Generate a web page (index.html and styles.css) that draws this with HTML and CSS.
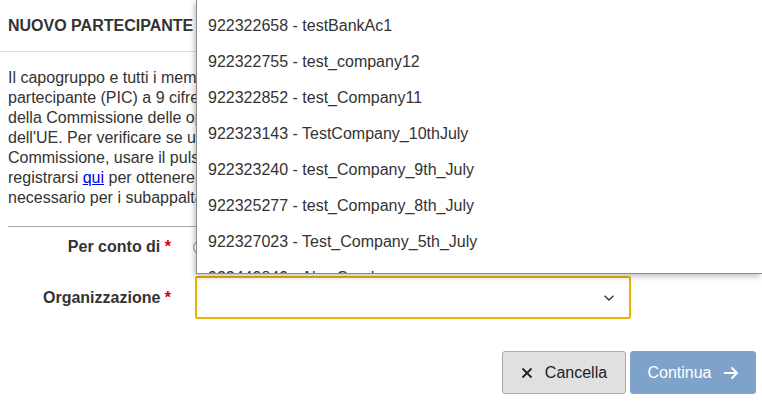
FILE: index.html
```html
<!DOCTYPE html>
<html lang="it">
<head>
<meta charset="utf-8">
<title>Nuovo partecipante</title>
<link rel="stylesheet" href="styles.css">
</head>
<body>
<div class="page">
  <div class="header">NUOVO PARTECIPANTE</div>
  <p class="intro">Il capogruppo e tutti i membri del consorzio devono disporre di un codice di identificazione del<br>partecipante (PIC) a 9 cifre, ottenuto tramite la registrazione nel Portale<br>della Commissione delle opportunità di finanziamento e gare d'appalto<br>dell'UE. Per verificare se un'organizzazione è già registrata presso la<br>Commissione, usare il pulsante di ricerca. In caso contrario, è possibile<br>registrarsi <a href="#" class="link">qui</a> per ottenere un PIC. Il PIC non è<br>necessario per i subappaltatori.</p>
  <div class="form">
    <div class="row row-radio">
      <label class="label">Per conto di <span class="req">*</span></label>
      <div class="field"><span class="radio"></span><span class="radio-text">Capogruppo</span></div>
    </div>
    <div class="row">
      <label class="label">Organizzazione <span class="req">*</span></label>
      <div class="field">
        <div class="select">
          <svg class="chev" width="12" height="8" viewBox="0 0 12 8"><path d="M1.5 1.8 L6 6 L10.5 1.8" fill="none" stroke="#333" stroke-width="1.3"/></svg>
        </div>
      </div>
    </div>
  </div>
  <div class="actions">
    <button class="btn btn-cancel"><svg class="x" width="12" height="12" viewBox="0 0 12 12"><path d="M1.5 1.5 L10.5 10.5 M10.5 1.5 L1.5 10.5" fill="none" stroke="#222" stroke-width="1.8"/></svg>Cancella</button>
    <button class="btn btn-continue">Continua<svg class="arrow" width="16" height="14" viewBox="0 0 16 14"><path d="M1 7 H14 M8.5 1.5 L14 7 L8.5 12.5" fill="none" stroke="#fff" stroke-width="2"/></svg></button>
  </div>
  <ul class="dropdown">
    <li>922322658 - testBankAc1</li>
    <li>922322755 - test_company12</li>
    <li>922322852 - test_Company11</li>
    <li>922323143 - TestCompany_10thJuly</li>
    <li>922323240 - test_Company_9th_July</li>
    <li>922325277 - test_Company_8th_July</li>
    <li>922327023 - Test_Company_5th_July</li>
    <li>922449849 - Alex Sandy</li>
  </ul>
</div>
</body>
</html>
```
FILE: styles.css
```css
html, body {
  margin: 0;
  padding: 0;
  background: #fff;
}
body {
  font-family: "Liberation Sans", Arial, sans-serif;
  color: #333;
  font-size: 16px;
}
.page {
  position: relative;
  width: 762px;
  height: 402px;
  overflow: hidden;
}
.header {
  height: 51px;
  padding: 0 8px;
  display: flex;
  align-items: center;
  font-weight: bold;
  font-size: 16px;
  border-bottom: 1px solid #ddd;
  white-space: nowrap;
}
.intro {
  margin: 16px 0 0;
  padding: 0 8px;
  line-height: 20px;
  white-space: nowrap;
  height: 140px;
}
.link {
  color: #0000ee;
  text-decoration: underline;
}
.form {
  margin: 18px 0 0 8px;
  border-top: 1px solid #a6a6a6;
}
.row {
  display: grid;
  grid-template-columns: 163px 436px;
  column-gap: 24px;
  align-items: center;
  height: 43px;
}
.row-radio {
  height: 40px;
  margin-bottom: 9px;
}
.label {
  text-align: right;
  font-weight: bold;
  white-space: nowrap;
}
.req {
  color: #d0021b;
}
.field {
  display: flex;
  align-items: center;
  height: 100%;
}
.radio {
  width: 13px;
  height: 13px;
  border: 1px solid #8a8a8a;
  border-radius: 50%;
  margin-left: -2px;
  margin-right: 6px;
}
.select {
  box-sizing: border-box;
  width: 436px;
  height: 43px;
  border: 2px solid #e5b400;
  border-radius: 2px;
  display: flex;
  align-items: center;
  justify-content: flex-end;
  padding-right: 14px;
}
.actions {
  display: flex;
  justify-content: flex-end;
  gap: 4px;
  margin-top: 32px;
  padding-right: 6px;
}
.btn {
  box-sizing: border-box;
  height: 43px;
  font-family: "Liberation Sans", Arial, sans-serif;
  font-size: 16px;
  border-radius: 3px;
  display: flex;
  align-items: center;
  justify-content: center;
  padding: 0;
}
.btn-cancel {
  width: 124px;
  background: #e0e0e0;
  border: 1px solid #aaa;
  color: #222;
}
.x {
  margin-right: 12px;
}
.btn-continue {
  width: 126px;
  background: #7fa2cb;
  border: 1px solid #7fa2cb;
  color: #fff;
}
.arrow {
  margin-left: 11px;
}
.dropdown {
  position: absolute;
  left: 196px;
  right: 0;
  top: 0;
  height: 274px;
  box-sizing: border-box;
  margin: 0;
  padding: 8px 0 0;
  list-style: none;
  background: #fff;
  border-left: 1px solid #8c8c8c;
  border-bottom: 1px solid #8c8c8c;
  box-shadow: -2px 3px 5px rgba(0, 0, 0, 0.22);
  overflow: hidden;
}
.dropdown li {
  height: 36px;
  line-height: 36px;
  padding-left: 11px;
  font-size: 16px;
  color: #333;
  white-space: nowrap;
}
```
